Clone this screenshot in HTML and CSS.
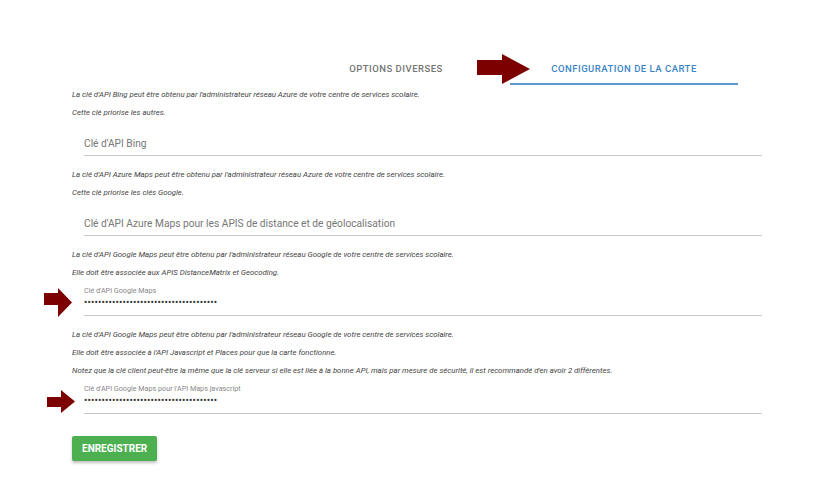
FILE: index.html
```html
<!DOCTYPE html>
<html>
    <head>
        <meta charset="UTF-8">
        <title>Configuration de la carte</title>
        <link rel="stylesheet" href="styles.css">
    </head>
    <body>
        <div class="container">
            <div class="tabs">
                <div class="tab">Options diverses</div>
                <div class="tab active">
                    Configuration de la carte
                    <svg class="big-arrow" width="53" height="30" viewBox="0 0 53 30">
                        <polygon points="0,6 25,6 25,0 53,15 25,30 25,21 0,21" fill="#7d0000"/>
                    </svg>
                </div>
            </div>

            <p class="help">La clé d'API Bing peut être obtenu par l'administrateur réseau Azure de votre centre de services scolaire.</p>
            <p class="help">Cette clé priorise les autres.</p>
            <div class="field">
                <input type="text" placeholder="Clé d'API Bing">
            </div>

            <p class="help">La clé d'API Azure Maps peut être obtenu par l'administrateur réseau Azure de votre centre de services scolaire.</p>
            <p class="help">Cette clé priorise les clés Google.</p>
            <div class="field">
                <input type="text" placeholder="Clé d'API Azure Maps pour les APIS de distance et de géolocalisation">
            </div>

            <p class="help">La clé d'API Google Maps peut être obtenu par l'administrateur réseau Google de votre centre de services scolaire.</p>
            <p class="help">Elle doit être associée aux APIS DistanceMatrix et Geocoding.</p>
            <div class="field filled">
                <svg class="arrow arrow-one" width="28" height="29" viewBox="0 0 28 29">
                    <polygon points="0,5 14,5 14,0 28,14.5 14,29 14,17 0,17" fill="#7d0000"/>
                </svg>
                <label>Clé d'API Google Maps</label>
                <input type="password" value="aaaaaaaaaaaaaaaaaaaaaaaaaaaaaaaaaaaaaa">
            </div>

            <p class="help">La clé d'API Google Maps peut être obtenu par l'administrateur réseau Google de votre centre de services scolaire.</p>
            <p class="help">Elle doit être associée à l'API Javascript et Places pour que la carte fonctionne.</p>
            <p class="help">Notez que la clé client peut-être la même que la clé serveur si elle est liée à la bonne API, mais par mesure de sécurité, il est recommandé d'en avoir 2 différentes.</p>
            <div class="field filled">
                <svg class="arrow arrow-two" width="28" height="23" viewBox="0 0 28 23">
                    <polygon points="0,7 14,7 14,0 28,11.5 14,23 14,17 0,17" fill="#7d0000"/>
                </svg>
                <label>Clé d'API Google Maps pour l'API Maps javascript</label>
                <input type="password" value="aaaaaaaaaaaaaaaaaaaaaaaaaaaaaaaaaaaaaa">
            </div>

            <button class="save-btn">Enregistrer</button>
        </div>
    </body>
</html>
```

FILE: styles.css
```css
body {
    font-family: Roboto, 'Liberation Sans', sans-serif;
    background-color: #fff;
    margin: 0;
    color: #333;
}
.container {
    width: 702px;
    padding: 53px 39px 20px 72px;
}
.tabs {
    display: flex;
    padding-left: 210px;
    margin-bottom: 1px;
}
.tab {
    position: relative;
    width: 228px;
    height: 30px;
    line-height: 31px;
    text-align: center;
    font-size: 9.5px;
    font-weight: 500;
    letter-spacing: 0.5px;
    text-transform: uppercase;
    color: #757575;
}
.tab.active {
    color: #3a85c6;
    border-bottom: 2px solid #5d9ad3;
}
.big-arrow {
    position: absolute;
    left: -33px;
    top: 1px;
}
.help {
    margin: 0;
    font-size: 7.8px;
    font-style: italic;
    line-height: 18px;
    color: #444;
}
.field {
    position: relative;
    margin: 10px 12px 10px 12px;
    border-bottom: 1px solid #c8c8c8;
}
.field input {
    display: block;
    width: 100%;
    border: none;
    outline: none;
    padding: 0;
    height: 23px;
    font-family: inherit;
    font-size: 10.2px;
    color: #333;
    background: transparent;
}
.field input::placeholder {
    color: #777;
}
.field.filled {
    margin-top: 3px;
    margin-bottom: 10px;
}
.field.filled label {
    display: block;
    font-size: 7.2px;
    line-height: 11px;
    color: #888;
}
.field.filled input {
    height: 13px;
    margin-bottom: 6px;
    font-size: 10px;
    letter-spacing: 0.13px;
}
.arrow {
    position: absolute;
    left: -40px;
}
.arrow-one {
    top: 3px;
}
.arrow-two {
    left: -37px;
    top: 7px;
}
.save-btn {
    display: block;
    margin-top: 22px;
    padding: 0 10px;
    height: 25px;
    border: none;
    border-radius: 2px;
    background-color: #4caf50;
    color: white;
    font-family: inherit;
    font-size: 10px;
    font-weight: 700;
    letter-spacing: 0;
    text-transform: uppercase;
    box-shadow: 0 2px 3px rgba(0,0,0,0.25);
    cursor: pointer;
}
```
